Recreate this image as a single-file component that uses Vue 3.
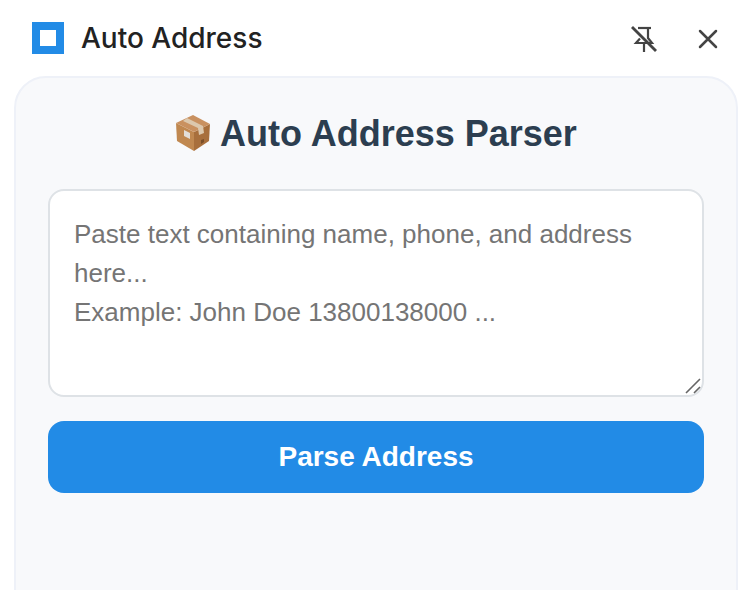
<script setup>
const title = 'Auto Address'
const placeholder = 'Paste text containing name, phone, and address here...\nExample: John Doe 13800138000 ...'
</script>

<template>
  <div class="window">
    <header class="bar">
      <div class="logo"><span class="logo-inner"></span></div>
      <span class="bar-title">{{ title }}</span>
      <svg class="pin" width="26" height="28" viewBox="0 0 26 28" fill="none" stroke="#444" stroke-width="2.2">
        <path d="M7 3H20" />
        <path d="M17 3V13L21 18H5L9 13.500" />
        <path d="M13 18V27" />
        <path d="M1 2L25 26" stroke-width="2.8" />
      </svg>
      <svg class="close" width="22" height="22" viewBox="0 0 22 22" fill="none" stroke="#444" stroke-width="2.5" stroke-linecap="round">
        <path d="M3 3L19 19M19 3L3 19" />
      </svg>
    </header>
    <main class="card">
      <h1 class="heading">
        <svg class="box" width="37" height="38" viewBox="0 0 37 38">
          <path d="M1 9L19 18V37L2 27Z" fill="#c08850" />
          <path d="M19 18L35 10L34 27L19 37Z" fill="#a86f3c" />
          <path d="M1 9L18 1L35 10L19 18Z" fill="#c99160" />
          <path d="M12 4L28 12L29 19L24 21L23 14L8 7Z" fill="#dcc8ad" />
          <path d="M9 16L15 19V25L9 22Z" fill="#e3ded8" />
          <path d="M26 26L29 25V28L26 30Z" fill="#7a4e28" />
        </svg>
        <span>Auto Address Parser</span>
      </h1>
      <div class="field">
        <textarea class="input" :placeholder="placeholder"></textarea>
        <svg class="grip" width="16" height="16" viewBox="0 0 16 16" fill="none" stroke="#666" stroke-width="1.6">
          <path d="M1 15L15 1M9 15L15 9" />
        </svg>
      </div>
      <button class="parse" type="button">Parse Address</button>
    </main>
  </div>
</template>

<style>
html, body { margin: 0; background: #fff; overflow: hidden; }
</style>

<style scoped>
.window {
  width: 752px;
  height: 590px;
  overflow: hidden;
  background: #fff;
  box-sizing: border-box;
  padding: 0 14px;
}
.bar {
  height: 76px;
  display: flex;
  align-items: center;
  padding: 0 16px 0 18px;
}
.logo {
  width: 32px;
  height: 32px;
  background: #228be6;
  display: flex;
  align-items: center;
  justify-content: center;
}
.logo-inner {
  width: 16px;
  height: 16px;
  background: #fff;
}
.bar-title {
  margin-left: 17px;
  font: 500 28px Inter, sans-serif;
  color: #222;
  flex: 1;
}
.pin { margin-right: 40px; margin-top: 1px; }
.close { margin-top: 1px; margin-right: 3px; }
.card {
  height: 560px;
  box-sizing: border-box;
  background: #f8f9fb;
  border: 2px solid #eef1f8;
  border-radius: 32px;
  padding: 32px 32px 0;
  display: flex;
  flex-direction: column;
}
.heading {
  margin: 0 0 32px;
  height: 47px;
  display: flex;
  align-items: center;
  justify-content: center;
  gap: 8px;
  font: 700 36px "Liberation Sans", Arial, sans-serif;
  color: #2c3e50;
}
.box { flex: none; margin-top: -1px; }
.field {
  position: relative;
  height: 208px;
}
.input {
  display: block;
  width: 100%;
  height: 100%;
  box-sizing: border-box;
  border: 2px solid #dee2e6;
  border-radius: 16px;
  padding: 24px;
  font: 26px/39px "Liberation Sans", Arial, sans-serif;
  background: #fff;
  color: #222;
  outline: none;
  resize: none;
}
.input::placeholder { color: #757575; opacity: 1; }
.grip {
  position: absolute;
  right: 3px;
  bottom: 3px;
  pointer-events: none;
}
.parse {
  margin-top: 24px;
  height: 72px;
  width: 100%;
  border: 0;
  border-radius: 16px;
  background: #228be6;
  color: #fff;
  font: 700 28px "Liberation Sans", Arial, sans-serif;
}
</style>
